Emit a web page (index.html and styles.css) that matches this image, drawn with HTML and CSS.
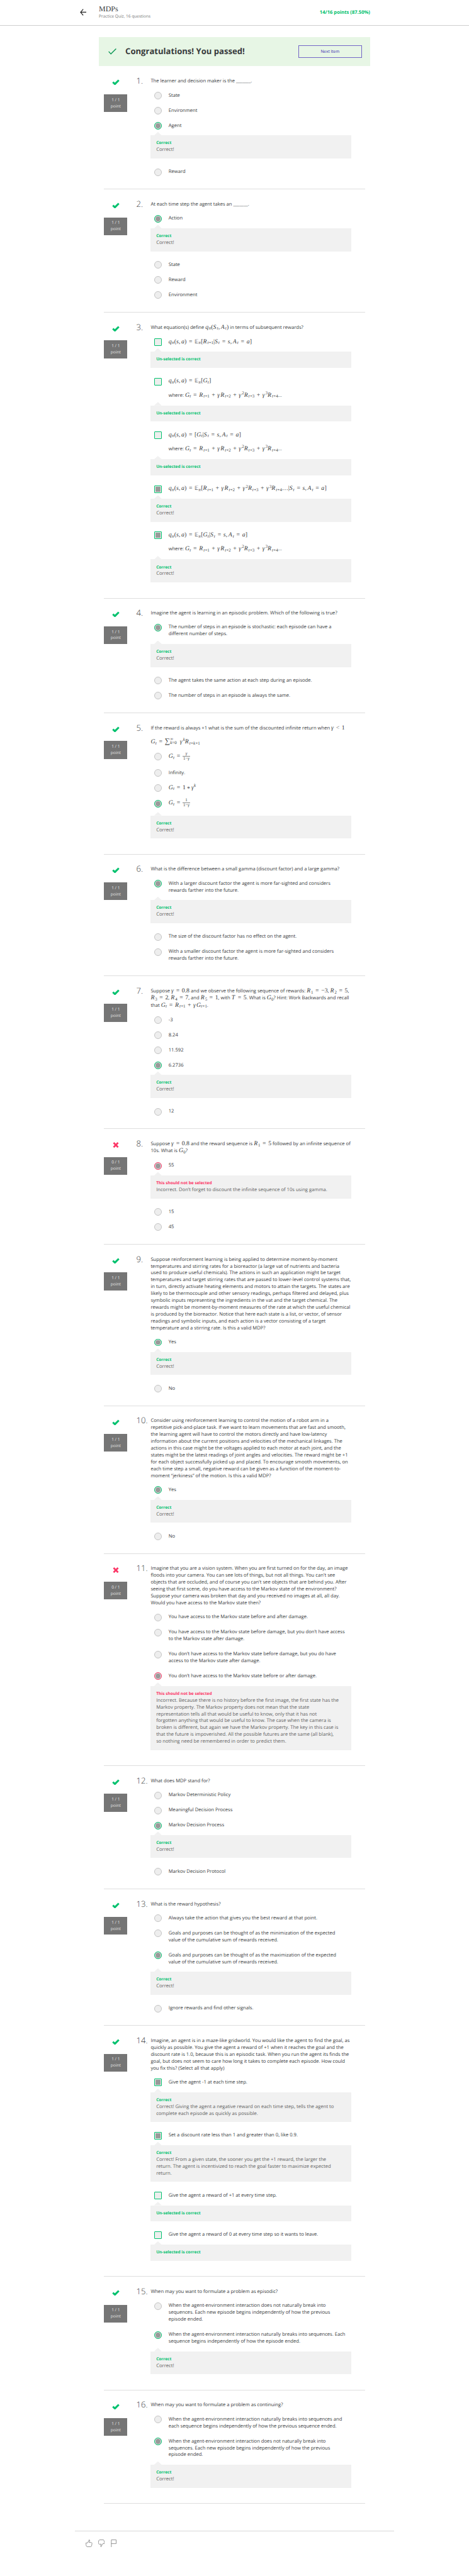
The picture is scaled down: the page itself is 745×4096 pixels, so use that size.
FILE: index.html
```html
<!DOCTYPE html>
<html lang="en">
<head>
<meta charset="utf-8">
<title>MDPs</title>
<link rel="stylesheet" href="styles.css">
</head>
<body>
<svg class="defs" width="0" height="0" aria-hidden="true">
  <symbol id="check" viewBox="0 0 22 17"><path d="M2.4 8.6 8.3 13.9 19.6 2.700" fill="none" stroke="#00c16e" stroke-width="5.600" stroke-linejoin="round"/></symbol>
  <symbol id="cross" viewBox="0 0 22 17"><path d="M4.500 1.900 17.500 15.100M17.500 1.900 4.500 15.100" fill="none" stroke="#fc3767" stroke-width="5"/></symbol>
</svg>
<header class="top">
  <svg class="back" viewBox="0 0 20 20"><path d="M9.500 1 1.800 10l7.700 9M1.800 10H19.500" fill="none" stroke="#1f1f1f" stroke-width="2.2"/></svg>
  <div class="titles"><h1>MDPs</h1><p>Practice Quiz, 16 questions</p></div>
  <div class="points">14/16 points (87.50%)</div>
</header>
<main class="quiz">
  <section class="banner">
    <svg class="tick" viewBox="0 0 24 18"><path d="M1.200 9 7.600 16.200 22.800 1" fill="none" stroke="#059450" stroke-width="2.400"/></svg>
    <h2>Congratulations! You passed!</h2>
    <a class="next">Next Item</a>
  </section>

  <section class="q">
    <div class="mark"><svg class="ic"><use href="#check"/></svg><div class="badge">1 / 1<br>point</div></div>
    <div class="num">1.</div>
    <div class="body">
      <p class="text">The learner and decision maker is the _______.</p>
      <div class="opt"><i class="radio"></i><p>State</p></div>
      <div class="opt"><i class="radio"></i><p>Environment</p></div>
      <div class="opt"><i class="radio on"></i><p>Agent</p></div>
      <div class="fb"><b>Correct</b><p>Correct!</p></div>
      <div class="opt"><i class="radio"></i><p>Reward</p></div>
    </div>
  </section>

  <section class="q">
    <div class="mark"><svg class="ic"><use href="#check"/></svg><div class="badge">1 / 1<br>point</div></div>
    <div class="num">2.</div>
    <div class="body">
      <p class="text">At each time step the agent takes an _______.</p>
      <div class="opt"><i class="radio on"></i><p>Action</p></div>
      <div class="fb"><b>Correct</b><p>Correct!</p></div>
      <div class="opt"><i class="radio"></i><p>State</p></div>
      <div class="opt"><i class="radio"></i><p>Reward</p></div>
      <div class="opt"><i class="radio"></i><p>Environment</p></div>
    </div>
  </section>

  <section class="q">
    <div class="mark"><svg class="ic"><use href="#check"/></svg><div class="badge">1 / 1<br>point</div></div>
    <div class="num">3.</div>
    <div class="body">
      <p class="text math">What equation(s) define <span class="m"><i>q</i><sub><i>π</i></sub>(<var>S</var><sub><i>t</i></sub><s>,</s><var>A</var><sub><i>t</i></sub>)</span> in terms of subsequent rewards?</p>
      <div class="opt"><i class="box"></i><p><span class="m"><i>q</i><sub><i>π</i></sub>(<i>s</i><s>,</s><i>a</i>)<u>=</u><em>𝔼</em><sub><i>π</i></sub>[<var>R</var><sub><i>t</i>+1</sub>|<var>S</var><sub><i>t</i></sub><u>=</u><i>s</i><s>,</s><var>A</var><sub><i>t</i></sub><u>=</u><i>a</i>]</span></p></div>
      <div class="fb"><b>Un-selected is correct</b></div>
      <div class="opt two"><i class="box"></i><div><p><span class="m"><i>q</i><sub><i>π</i></sub>(<i>s</i><s>,</s><i>a</i>)<u>=</u><em>𝔼</em><sub><i>π</i></sub>[<i>G</i><sub><i>t</i></sub>]</span></p>
        <p>where: <span class="m"><i>G</i><sub><i>t</i></sub><u>=</u><var>R</var><sub><i>t</i>+1</sub><u>+</u><var>γ</var><var>R</var><sub><i>t</i>+2</sub><u>+</u><var>γ</var><sup>2</sup><var>R</var><sub><i>t</i>+3</sub><u>+</u><var>γ</var><sup>3</sup><var>R</var><sub><i>t</i>+4</sub></span>...</p></div></div>
      <div class="fb"><b>Un-selected is correct</b></div>
      <div class="opt two"><i class="box"></i><div><p><span class="m"><i>q</i><sub><i>π</i></sub>(<i>s</i><s>,</s><i>a</i>)<u>=</u>[<i>G</i><sub><i>t</i></sub>|<var>S</var><sub><i>t</i></sub><u>=</u><i>s</i><s>,</s><var>A</var><sub><i>t</i></sub><u>=</u><i>a</i>]</span></p>
        <p>where: <span class="m"><i>G</i><sub><i>t</i></sub><u>=</u><var>R</var><sub><i>t</i>+1</sub><u>+</u><var>γ</var><var>R</var><sub><i>t</i>+2</sub><u>+</u><var>γ</var><sup>2</sup><var>R</var><sub><i>t</i>+3</sub><u>+</u><var>γ</var><sup>3</sup><var>R</var><sub><i>t</i>+4</sub></span>...</p></div></div>
      <div class="fb"><b>Un-selected is correct</b></div>
      <div class="opt"><i class="box on"></i><p><span class="m"><i>q</i><sub><i>π</i></sub>(<i>s</i><s>,</s><i>a</i>)<u>=</u><em>𝔼</em><sub><i>π</i></sub>[<var>R</var><sub><i>t</i>+1</sub><u>+</u><var>γ</var><var>R</var><sub><i>t</i>+2</sub><u>+</u><var>γ</var><sup>2</sup><var>R</var><sub><i>t</i>+3</sub><u>+</u><var>γ</var><sup>3</sup><var>R</var><sub><i>t</i>+4</sub>…|<var>S</var><sub><i>t</i></sub><u>=</u><i>s</i><s>,</s><var>A</var><sub><i>t</i></sub><u>=</u><i>a</i>]</span></p></div>
      <div class="fb"><b>Correct</b><p>Correct!</p></div>
      <div class="opt two"><i class="box on"></i><div><p><span class="m"><i>q</i><sub><i>π</i></sub>(<i>s</i><s>,</s><i>a</i>)<u>=</u><em>𝔼</em><sub><i>π</i></sub>[<i>G</i><sub><i>t</i></sub>|<var>S</var><sub><i>t</i></sub><u>=</u><i>s</i><s>,</s><var>A</var><sub><i>t</i></sub><u>=</u><i>a</i>]</span></p>
        <p>where: <span class="m"><i>G</i><sub><i>t</i></sub><u>=</u><var>R</var><sub><i>t</i>+1</sub><u>+</u><var>γ</var><var>R</var><sub><i>t</i>+2</sub><u>+</u><var>γ</var><sup>2</sup><var>R</var><sub><i>t</i>+3</sub><u>+</u><var>γ</var><sup>3</sup><var>R</var><sub><i>t</i>+4</sub></span>...</p></div></div>
      <div class="fb"><b>Correct</b><p>Correct!</p></div>
    </div>
  </section>

  <section class="q">
    <div class="mark"><svg class="ic"><use href="#check"/></svg><div class="badge">1 / 1<br>point</div></div>
    <div class="num">4.</div>
    <div class="body">
      <p class="text">Imagine the agent is learning in an episodic problem. Which of the following is true?</p>
      <div class="opt"><i class="radio on"></i><p>The number of steps in an episode is stochastic: each episode can have a<br>different number of steps.</p></div>
      <div class="fb"><b>Correct</b><p>Correct!</p></div>
      <div class="opt"><i class="radio"></i><p>The agent takes the same action at each step during an episode.</p></div>
      <div class="opt"><i class="radio"></i><p>The number of steps in an episode is always the same.</p></div>
    </div>
  </section>

  <section class="q">
    <div class="mark"><svg class="ic"><use href="#check"/></svg><div class="badge">1 / 1<br>point</div></div>
    <div class="num">5.</div>
    <div class="body">
      <p class="text math first">If the reward is always +1 what is the sum of the discounted infinite return when <span class="m"><i>γ</i><u>&lt;</u>1</span></p>
      <p class="text math"><span class="m"><i>G</i><sub><i>t</i></sub><u>=</u><span class="sum">∑</span><span class="lims"><span>∞</span><span><i>k</i>=0</span></span> <var>γ</var><sup><i>k</i></sup><var>R</var><sub><i>t</i>+<i>k</i>+1</sub></span></p>
      <div class="opt h47"><i class="radio"></i><p><span class="m"><i>G</i><sub><i>t</i></sub><u>=</u><span class="frac"><span><i>γ</i></span><span>1−<i>γ</i></span></span></span></p></div>
      <div class="opt"><i class="radio"></i><p>Infinity.</p></div>
      <div class="opt h45"><i class="radio"></i><p><span class="m"><i>G</i><sub><i>t</i></sub><u>=</u>1<span class="star">*</span><i>γ</i><sup><i>k</i></sup></span></p></div>
      <div class="opt h51"><i class="radio on"></i><p><span class="m"><i>G</i><sub><i>t</i></sub><u>=</u><span class="frac"><span>1</span><span>1−<i>γ</i></span></span></span></p></div>
      <div class="fb"><b>Correct</b><p>Correct!</p></div>
    </div>
  </section>

  <section class="q">
    <div class="mark"><svg class="ic"><use href="#check"/></svg><div class="badge">1 / 1<br>point</div></div>
    <div class="num">6.</div>
    <div class="body">
      <p class="text">What is the difference between a small gamma (discount factor) and a large gamma?</p>
      <div class="opt"><i class="radio on"></i><p>With a larger discount factor the agent is more far-sighted and considers<br>rewards farther into the future.</p></div>
      <div class="fb"><b>Correct</b><p>Correct!</p></div>
      <div class="opt"><i class="radio"></i><p>The size of the discount factor has no effect on the agent.</p></div>
      <div class="opt"><i class="radio"></i><p>With a smaller discount factor the agent is more far-sighted and considers<br>rewards farther into the future.</p></div>
    </div>
  </section>

  <section class="q">
    <div class="mark"><svg class="ic"><use href="#check"/></svg><div class="badge">1 / 1<br>point</div></div>
    <div class="num">7.</div>
    <div class="body">
      <p class="text math">Suppose <span class="m"><i>γ</i><u>=</u>0.8</span> and we observe the following sequence of rewards: <span class="m"><var>R</var><sub>1</sub><u>=</u>−3</span>, <span class="m"><var>R</var><sub>2</sub><u>=</u>5</span>,<br><span class="m"><var>R</var><sub>3</sub><u>=</u>2</span>, <span class="m"><var>R</var><sub>4</sub><u>=</u>7</span>, and <span class="m"><var>R</var><sub>5</sub><u>=</u>1</span>, with <span class="m"><var>T</var><u>=</u>5</span>. What is <span class="m"><i>G</i><sub>0</sub></span>? Hint: Work Backwards and recall<br>that <span class="m"><i>G</i><sub><i>t</i></sub><u>=</u><var>R</var><sub><i>t</i>+1</sub><u>+</u><var>γ</var><i>G</i><sub><i>t</i>+1</sub></span>.</p>
      <div class="opt"><i class="radio"></i><p>-3</p></div>
      <div class="opt"><i class="radio"></i><p>8.24</p></div>
      <div class="opt"><i class="radio"></i><p>11.592</p></div>
      <div class="opt"><i class="radio on"></i><p>6.2736</p></div>
      <div class="fb"><b>Correct</b><p>Correct!</p></div>
      <div class="opt"><i class="radio"></i><p>12</p></div>
    </div>
  </section>

  <section class="q wrong">
    <div class="mark"><svg class="ic"><use href="#cross"/></svg><div class="badge">0 / 1<br>point</div></div>
    <div class="num">8.</div>
    <div class="body">
      <p class="text math">Suppose <span class="m"><i>γ</i><u>=</u>0.8</span> and the reward sequence is <span class="m"><var>R</var><sub>1</sub><u>=</u>5</span> followed by an infinite sequence of<br>10s. What is <span class="m"><i>G</i><sub>0</sub></span>?</p>
      <div class="opt"><i class="radio on"></i><p>55</p></div>
      <div class="fb"><b>This should not be selected</b><p>Incorrect. Don’t forget to discount the infinite sequence of 10s using gamma.</p></div>
      <div class="opt"><i class="radio"></i><p>15</p></div>
      <div class="opt"><i class="radio"></i><p>45</p></div>
    </div>
  </section>

  <section class="q">
    <div class="mark"><svg class="ic"><use href="#check"/></svg><div class="badge">1 / 1<br>point</div></div>
    <div class="num">9.</div>
    <div class="body">
      <p class="text">Suppose reinforcement learning is being applied to determine moment-by-moment<br>temperatures and stirring rates for a bioreactor (a large vat of nutrients and bacteria<br>used to produce useful chemicals). The actions in such an application might be target<br>temperatures and target stirring rates that are passed to lower-level control systems that,<br>in turn, directly activate heating elements and motors to attain the targets. The states are<br>likely to be thermocouple and other sensory readings, perhaps filtered and delayed, plus<br>symbolic inputs representing the ingredients in the vat and the target chemical. The<br>rewards might be moment-by-moment measures of the rate at which the useful chemical<br>is produced by the bioreactor. Notice that here each state is a list, or vector, of sensor<br>readings and symbolic inputs, and each action is a vector consisting of a target<br>temperature and a stirring rate. Is this a valid MDP?</p>
      <div class="opt"><i class="radio on"></i><p>Yes</p></div>
      <div class="fb"><b>Correct</b><p>Correct!</p></div>
      <div class="opt"><i class="radio"></i><p>No</p></div>
    </div>
  </section>

  <section class="q">
    <div class="mark"><svg class="ic"><use href="#check"/></svg><div class="badge">1 / 1<br>point</div></div>
    <div class="num">10.</div>
    <div class="body">
      <p class="text">Consider using reinforcement learning to control the motion of a robot arm in a<br>repetitive pick-and-place task. If we want to learn movements that are fast and smooth,<br>the learning agent will have to control the motors directly and have low-latency<br>information about the current positions and velocities of the mechanical linkages. The<br>actions in this case might be the voltages applied to each motor at each joint, and the<br>states might be the latest readings of joint angles and velocities. The reward might be +1<br>for each object successfully picked up and placed. To encourage smooth movements, on<br>each time step a small, negative reward can be given as a function of the moment-to-<br>moment “jerkiness” of the motion. Is this a valid MDP?</p>
      <div class="opt"><i class="radio on"></i><p>Yes</p></div>
      <div class="fb"><b>Correct</b><p>Correct!</p></div>
      <div class="opt"><i class="radio"></i><p>No</p></div>
    </div>
  </section>

  <section class="q wrong">
    <div class="mark"><svg class="ic"><use href="#cross"/></svg><div class="badge">0 / 1<br>point</div></div>
    <div class="num">11.</div>
    <div class="body">
      <p class="text">Imagine that you are a vision system. When you are first turned on for the day, an image<br>floods into your camera. You can see lots of things, but not all things. You can't see<br>objects that are occluded, and of course you can't see objects that are behind you. After<br>seeing that first scene, do you have access to the Markov state of the environment?<br>Suppose your camera was broken that day and you received no images at all, all day.<br>Would you have access to the Markov state then?</p>
      <div class="opt"><i class="radio"></i><p>You have access to the Markov state before and after damage.</p></div>
      <div class="opt"><i class="radio"></i><p>You have access to the Markov state before damage, but you don’t have access<br>to the Markov state after damage.</p></div>
      <div class="opt"><i class="radio"></i><p>You don’t have access to the Markov state before damage, but you do have<br>access to the Markov state after damage.</p></div>
      <div class="opt"><i class="radio on"></i><p>You don’t have access to the Markov state before or after damage.</p></div>
      <div class="fb"><b>This should not be selected</b><p>Incorrect. Because there is no history before the first image, the first state has the<br>Markov property. The Markov property does not mean that the state<br>representation tells all that would be useful to know, only that it has not<br>forgotten anything that would be useful to know. The case when the camera is<br>broken is different, but again we have the Markov property. The key in this case is<br>that the future is impoverished. All the possible futures are the same (all blank),<br>so nothing need be remembered in order to predict them.</p></div>
    </div>
  </section>

  <section class="q">
    <div class="mark"><svg class="ic"><use href="#check"/></svg><div class="badge">1 / 1<br>point</div></div>
    <div class="num">12.</div>
    <div class="body">
      <p class="text">What does MDP stand for?</p>
      <div class="opt"><i class="radio"></i><p>Markov Deterministic Policy</p></div>
      <div class="opt"><i class="radio"></i><p>Meaningful Decision Process</p></div>
      <div class="opt"><i class="radio on"></i><p>Markov Decision Process</p></div>
      <div class="fb"><b>Correct</b><p>Correct!</p></div>
      <div class="opt"><i class="radio"></i><p>Markov Decision Protocol</p></div>
    </div>
  </section>

  <section class="q">
    <div class="mark"><svg class="ic"><use href="#check"/></svg><div class="badge">1 / 1<br>point</div></div>
    <div class="num">13.</div>
    <div class="body">
      <p class="text">What is the reward hypothesis?</p>
      <div class="opt"><i class="radio"></i><p>Always take the action that gives you the best reward at that point.</p></div>
      <div class="opt"><i class="radio"></i><p>Goals and purposes can be thought of as the minimization of the expected<br>value of the cumulative sum of rewards received.</p></div>
      <div class="opt"><i class="radio on"></i><p>Goals and purposes can be thought of as the maximization of the expected<br>value of the cumulative sum of rewards received.</p></div>
      <div class="fb"><b>Correct</b><p>Correct!</p></div>
      <div class="opt"><i class="radio"></i><p>Ignore rewards and find other signals.</p></div>
    </div>
  </section>

  <section class="q">
    <div class="mark"><svg class="ic"><use href="#check"/></svg><div class="badge">1 / 1<br>point</div></div>
    <div class="num">14.</div>
    <div class="body">
      <p class="text">Imagine, an agent is in a maze-like gridworld. You would like the agent to find the goal, as<br>quickly as possible. You give the agent a reward of +1 when it reaches the goal and the<br>discount rate is 1.0, because this is an episodic task. When you run the agent its finds the<br>goal, but does not seem to care how long it takes to complete each episode. How could<br>you fix this? (Select all that apply)</p>
      <div class="opt"><i class="box on"></i><p>Give the agent -1 at each time step.</p></div>
      <div class="fb"><b>Correct</b><p>Correct! Giving the agent a negative reward on each time step, tells the agent to<br>complete each episode as quickly as possible.</p></div>
      <div class="opt"><i class="box on"></i><p>Set a discount rate less than 1 and greater than 0, like 0.9.</p></div>
      <div class="fb"><b>Correct</b><p>Correct! From a given state, the sooner you get the +1 reward, the larger the<br>return. The agent is incentivized to reach the goal faster to maximize expected<br>return.</p></div>
      <div class="opt"><i class="box"></i><p>Give the agent a reward of +1 at every time step.</p></div>
      <div class="fb"><b>Un-selected is correct</b></div>
      <div class="opt"><i class="box"></i><p>Give the agent a reward of 0 at every time step so it wants to leave.</p></div>
      <div class="fb"><b>Un-selected is correct</b></div>
    </div>
  </section>

  <section class="q">
    <div class="mark"><svg class="ic"><use href="#check"/></svg><div class="badge">1 / 1<br>point</div></div>
    <div class="num">15.</div>
    <div class="body">
      <p class="text">When may you want to formulate a problem as episodic?</p>
      <div class="opt"><i class="radio"></i><p>When the agent-environment interaction does not naturally break into<br>sequences. Each new episode begins independently of how the previous<br>episode ended.</p></div>
      <div class="opt"><i class="radio on"></i><p>When the agent-environment interaction naturally breaks into sequences. Each<br>sequence begins independently of how the episode ended.</p></div>
      <div class="fb"><b>Correct</b><p>Correct!</p></div>
    </div>
  </section>

  <section class="q">
    <div class="mark"><svg class="ic"><use href="#check"/></svg><div class="badge">1 / 1<br>point</div></div>
    <div class="num">16.</div>
    <div class="body">
      <p class="text">When may you want to formulate a problem as continuing?</p>
      <div class="opt"><i class="radio"></i><p>When the agent-environment interaction naturally breaks into sequences and<br>each sequence begins independently of how the previous sequence ended.</p></div>
      <div class="opt"><i class="radio on"></i><p>When the agent-environment interaction does not naturally break into<br>sequences. Each new episode begins independently of how the previous<br>episode ended.</p></div>
      <div class="fb"><b>Correct</b><p>Correct!</p></div>
    </div>
  </section>
</main>
<footer class="foot">
  <svg viewBox="0 0 19 22"><path d="M1 10h4.500L9.300 3.500C9.600 1 10.500.7 11.200 1c1.400.8.6 3.700-1 7.500h6c2 .5 2.600 2 2.300 4l-1 5.500c-.5 2-1.500 3-3 3H4C1.500 20.500 1 15 1 10z"/></svg>
  <svg viewBox="0 0 19 22"><path d="M18 12h-4.500L9.700 18.500C9.400 21 8.500 21.300 7.800 21c-1.400-.8-.6-3.700 1-7.500h-6C.8 13 .2 11.500.5 9.500l1-5.500C2 2 3 1 4.500 1H15C17.500 1.500 18 7 18 12z"/></svg>
  <svg viewBox="0 0 19 22"><path d="M1.600 22V1h14v11H1.600"/></svg>
</footer>
</body>
</html>
```
FILE: styles.css
```css
html { font-size: 5.4535px; background: #fff; }
body {
  margin: 0;
  font: 1.4rem/2rem "Open Sans", "Noto Sans", sans-serif;
  color: #373a3c;
  white-space: nowrap;
  text-rendering: geometricPrecision;
}
h1, h2, p { margin: 0; font-weight: 400; }
.defs { position: absolute; }

.top {
  box-sizing: border-box;
  height: 7.6rem;
  padding: 0 28.8rem 0 23.2rem;
  display: flex;
  align-items: center;
  border-bottom: 1px solid #cfcfcf;
}
.back { width: 2rem; height: 2rem; margin: 0 3.6rem 0.2rem 0; }
.titles { flex: 1; padding-bottom: 0.3rem; }
.titles h1 { font: 2.2rem/2.5rem "Liberation Serif", serif; }
.titles p { font-size: 1.2rem; line-height: 1.8rem; color: #757575; }
.points { padding-top: 0.1rem; font-weight: 700; color: #00c16e; }

.quiz { width: 79rem; margin: 3.2rem auto 0; }
.banner {
  box-sizing: border-box;
  height: 8.4rem;
  padding: 0 2.4rem 0 2.8rem;
  margin-bottom: 0.2rem;
  display: flex;
  align-items: center;
  background: #e7f6e5;
}
.tick { width: 2.4rem; height: 1.8rem; margin-right: 2.5rem; }
.banner h2 { flex: 1; padding-bottom: 0.2rem; font-size: 2.4rem; line-height: 3.2rem; font-weight: 700; }
.next {
  box-sizing: border-box;
  width: 18.5rem;
  height: 3.6rem;
  border: 1px solid #7365c6;
  color: #381fb0;
  font-size: 1.2rem;
  line-height: calc(3.6rem - 2px);
  text-align: center;
}

.q {
  display: flex;
  width: 76rem;
  margin: 0 auto;
  padding: 3.4rem 0 calc(2.9rem - 1px);
  border-bottom: 1px solid #dedede;
}
.mark { width: 6.8rem; margin-right: 2.6rem; padding-top: 0.4rem; }
.ic { display: block; width: 2.2rem; height: 1.7rem; margin: 0 auto 2.6rem; }
.badge {
  box-sizing: border-box;
  height: 5.2rem;
  padding-top: 0.7rem;
  background: #757575;
  color: #e6e6e6;
  font-size: 1.2rem;
  line-height: 1.8rem;
  text-align: center;
}
.num { width: 4.2rem; font-size: 2.4rem; line-height: 1.6rem; font-weight: 300; }
.body { width: 58.4rem; }
.text { margin-bottom: 0.9rem; }
.text.math { line-height: 2.1rem; }
.text.first { margin-bottom: 2rem; }

.opt { display: flex; gap: 2rem; padding: 1.2rem 0 1.2rem 1rem; }
.opt > p:has(.m) { height: 2rem; }
.opt.h47 { padding-bottom: 1.5rem; }
.opt.h45 { padding-bottom: 1.3rem; }
.opt.h51 { padding-bottom: 1.9rem; }
.opt.two p { height: 2.1rem; line-height: 2.1rem; }
.opt.two p + p { margin-top: 2rem; }
.radio, .box {
  box-sizing: border-box;
  flex: none;
  width: 2.2rem;
  height: 2.2rem;
  margin: -0.1rem 0;
  border: 1px solid #c4c4c4;
  background: #eee;
}
.radio { border-radius: 50%; }
.box { border-color: #00c16e; border-radius: 1px; }
.radio.on, .box.on {
  border-color: #00c16e;
  background: #999;
  box-shadow: inset 0 0 0 0.2rem #eee;
}
.wrong .radio.on { border-color: #fc3767; }

.fb {
  position: relative;
  margin: 0.6rem 0 1.8rem;
  padding: 1.3rem 1.6rem 1.4rem;
  background: #f1f1f1;
  color: #616161;
}
.fb::before {
  content: "";
  position: absolute;
  left: 1rem;
  top: -1rem;
  width: 2.2rem;
  height: 1rem;
  background: #f1f1f1;
  clip-path: polygon(50% 0, 100% 100%, 0 100%);
}
.fb b { display: block; font-size: 1.2rem; line-height: 2rem; font-weight: 700; color: #00c16e; }
.wrong .fb b { color: #fc3767; }

/* formulas */
.m { font: 1.8rem/1 "Liberation Serif", serif; line-height: 0; }
.m i { margin-right: 0.02em; }
.m var { margin-right: 0.1em; }
.m sub, .m sup { font-size: 0.7em; line-height: 0; position: relative; vertical-align: baseline; }
.m sub { top: 0.25em; }
.m sub i { margin-right: 0.06em; }
.m sup { top: -0.55em; }
.m u { text-decoration: none; margin: 0 0.36em; }
.m s { text-decoration: none; margin-right: 0.16em; }
.m em { font: 1.6rem/0 "DejaVu Sans", sans-serif; }
.star { margin: 0 0.22em; position: relative; top: 0.2em; }
.sum { font-size: 2.2rem; line-height: 0; }
.lims, .frac { display: inline-flex; flex-direction: column; vertical-align: middle; font-size: 1.26rem; line-height: 1.3rem; }
.lims { line-height: 1.1rem; margin: -0.5rem 0.5rem -0.3rem 0; }
.frac { padding: 0 0.1rem; margin: -0.5rem 0; text-align: center; }
.frac span { padding: 0 0.1rem; }
.frac span + span { border-top: 1px solid #888; }

.foot {
  display: flex;
  gap: 1.7rem;
  width: 93rem;
  box-sizing: border-box;
  margin: 7.9rem auto 0;
  padding: 2.3rem 3.2rem;
  border-top: 1px solid #d8d8d8;
}
.foot svg { width: 1.9rem; height: 2.2rem; fill: none; stroke: #616161; stroke-width: 1.2; }
```
